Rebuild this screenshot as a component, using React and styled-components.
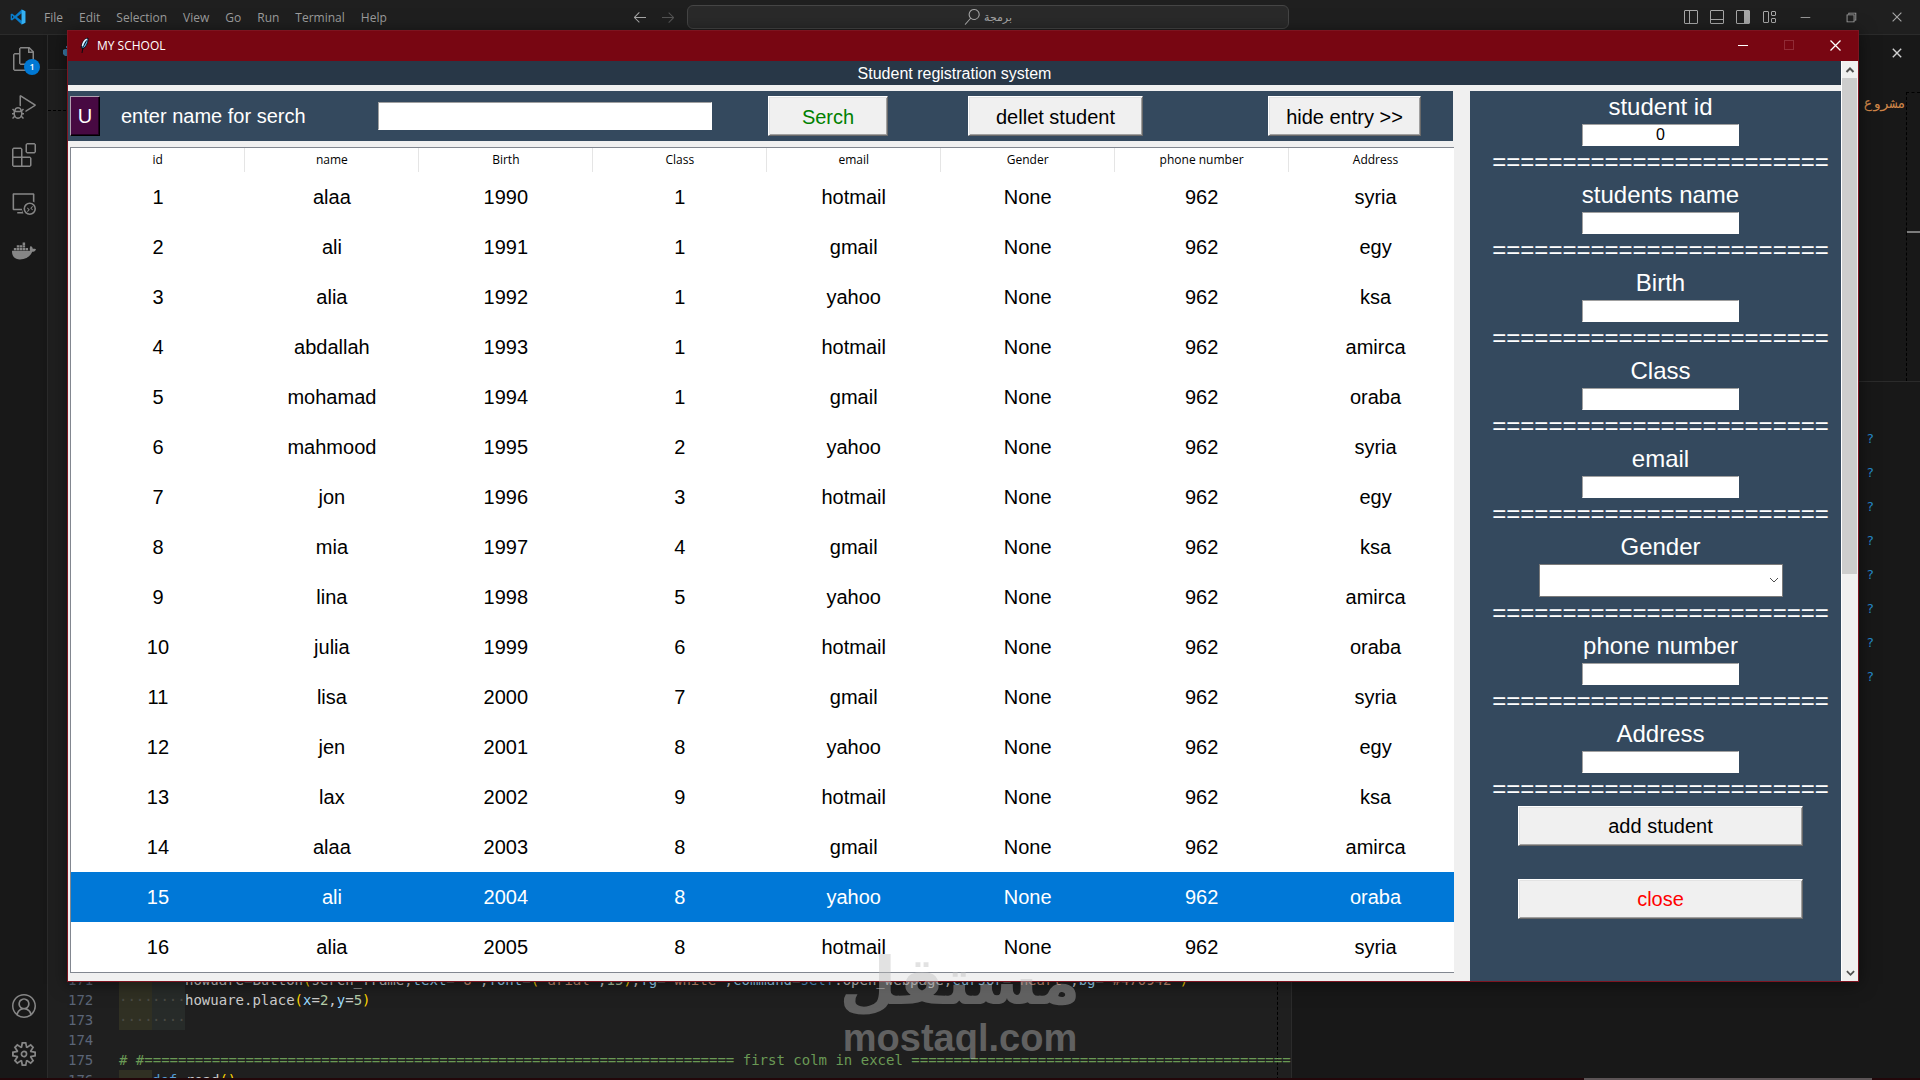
import React from "react";
import styled, { createGlobalStyle } from "styled-components";
import {
  VscFiles,
  VscDebugAlt,
  VscExtensions,
  VscRemoteExplorer,
  VscAccount,
  VscSettingsGear,
  VscArrowLeft,
  VscArrowRight,
  VscSearch,
  VscLayoutSidebarLeftOff,
  VscLayoutPanelOff,
  VscLayoutSidebarRight,
  VscLayout,
  VscChromeMinimize,
  VscChromeRestore,
  VscChromeClose,
} from "react-icons/vsc";
import { FaDocker } from "react-icons/fa";

const ui = '"Open Sans", "Noto Sans", sans-serif';
const arial = '"Liberation Sans", Arial, sans-serif';
const mono = '"DejaVu Sans Mono", monospace';

const Global = createGlobalStyle`
  *, *::before, *::after { box-sizing: border-box; }
  body { margin: 0; background: #181818; overflow: hidden; }
  button, input, select { font: inherit; margin: 0; }
`;

/* ---------- code editor in the background ---------- */

const Desktop = styled.div`
  position: relative;
  display: flex;
  flex-direction: column;
  height: 100vh;
  overflow: hidden;
  background: #181818;
  font-family: ${ui};
`;

const TitleBar = styled.header`
  display: grid;
  grid-template-columns: 1fr auto 1fr;
  align-items: center;
  height: 35px;
  flex: none;
  background: #1f1f1f;
  border-bottom: 1px solid #2b2b2b;
  color: #9d9d9d;
  font-size: 12px;
`;

const MenuBar = styled.nav`
  display: flex;
  align-items: center;
  padding-left: 10px;
`;

const MenuItem = styled.button`
  padding: 1px 8px 0;
  border: 0;
  background: none;
  color: inherit;
  line-height: 20px;
`;

const LogoBox = styled.span`
  display: flex;
  margin-right: 10px;
`;

const CommandCenter = styled.div`
  display: flex;
  align-items: center;
  gap: 10px;
`;

const IconButton = styled.button`
  display: flex;
  align-items: center;
  justify-content: center;
  width: ${(p) => p.$w || 26}px;
  height: 24px;
  padding: 0;
  border: 0;
  background: none;
  color: ${(p) => (p.$dim ? "#555" : "#a8a8a8")};
`;

const CommandBox = styled.button`
  display: flex;
  align-items: center;
  justify-content: center;
  gap: 4px;
  width: 602px;
  height: 24px;
  padding: 0;
  border: 1px solid #454545;
  border-radius: 6px;
  background: #2a2a2a;
  color: #a8a8a8;
  font-family: "DejaVu Sans", sans-serif;
  font-size: 11px;
`;

const WindowTools = styled.div`
  display: flex;
  align-items: center;
  justify-content: flex-end;
`;

const Workbench = styled.div`
  display: flex;
  flex: 1;
  min-height: 0;
`;

const ActivityBar = styled.nav`
  display: flex;
  flex-direction: column;
  width: 48px;
  flex: none;
  border-right: 1px solid #2b2b2b;
  background: #181818;
`;

const ActivityItem = styled.button`
  position: relative;
  display: flex;
  align-items: center;
  justify-content: center;
  height: 48px;
  padding: 0;
  border: 0;
  background: none;
  color: #868686;
  margin-top: ${(p) => (p.$push ? "auto" : "0")};
`;

const Badge = styled.span`
  position: absolute;
  left: 24px;
  top: 24px;
  width: 16px;
  height: 16px;
  border-radius: 8px;
  background: #0078d4;
  color: #fff;
  font-size: 9px;
  font-weight: 600;
  line-height: 16px;
  text-align: center;
`;

const Editor = styled.main`
  display: flex;
  flex-direction: column;
  flex: 1;
  min-width: 0;
  overflow: hidden;
  background: #1f1f1f;
  border-right: 1px solid #2b2b2b;
`;

const TabStrip = styled.div`
  display: flex;
  align-items: center;
  height: 35px;
  flex: none;
  padding-left: 14px;
  border-bottom: 1px solid #2b2b2b;
  background: #181818;
`;

const CodeArea = styled.div`
  display: flex;
  flex-direction: column;
  justify-content: flex-end;
  flex: 1;
  min-height: 0;
  margin: 40px 13px -12px 0;
  border-top: 1px dashed #000;
  border-right: 1px dashed #000;
  font-family: ${mono};
  font-size: 14px;
  line-height: 20px;
  color: #ccc;
`;

const CodeLine = styled.div`
  display: flex;
  height: 20px;
  padding-left: 20px;
  white-space: pre;
`;

const LineNumber = styled.span`
  width: 51px;
  flex: none;
  color: #5b6577;
`;

const Indent = styled.span`
  width: 33px;
  flex: none;
  overflow: hidden;
  background: ${(p) => (p.$deep ? "#272b29" : "#303023")};
  color: #4a4a44;
`;

const Tok = styled.span`
  color: ${(p) => p.$c};
`;

const SidePanel = styled.aside`
  display: flex;
  flex-direction: column;
  width: 628px;
  flex: none;
  background: #181818;
`;

const PreviewPane = styled.section`
  display: flex;
  flex-direction: column;
  align-items: flex-end;
  height: 347px;
  flex: none;
  border-bottom: 1px solid #2b2b2b;
`;

const PanelTab = styled.div`
  display: flex;
  justify-content: flex-end;
  height: 57px;
  padding: 6px 15px 0 0;
`;

const PreviewBody = styled.div`
  display: flex;
  flex: 1;
`;

const PreviewText = styled.span`
  color: #d08648;
  font-family: "DejaVu Sans Mono", monospace;
  font-size: 14px;
  line-height: 22px;
`;

const Minimap = styled.div`
  width: 14px;
  padding-top: 138px;
  border-top: 1px dashed #000;
  border-left: 1px dashed #000;

  &::before {
    content: "";
    display: block;
    height: 2px;
    background: #7c7c7c;
  }
`;

const Prompts = styled.ul`
  display: flex;
  flex-direction: column;
  align-items: flex-end;
  gap: 14px;
  margin: 0;
  padding: 47px 46px 0 0;
  list-style: none;
  color: #2488c8;
  font-family: ${mono};
  font-size: 13px;
  line-height: 20px;
`;

const BottomStrip = styled.footer`
  display: flex;
  justify-content: flex-end;
  height: 2px;
  flex: none;
  padding-right: 48px;
  background: #22070a;

  &::after {
    content: "";
    width: 288px;
    background: #5c5456;
  }
`;

/* ---------- school window ---------- */

const AppWindow = styled.section`
  position: absolute;
  top: 30px;
  left: 67px;
  right: 61px;
  display: flex;
  flex-direction: column;
  border: 1px solid #7d1420;
  background: #f0f0f0;
  box-shadow: 0 2px 16px rgba(0, 0, 0, 0.5);
`;

const Caption = styled.header`
  display: flex;
  align-items: center;
  height: 30px;
  padding: 0 0 2px 10px;
  background: #780612;
  color: #fff;
`;

const CaptionTitle = styled.h1`
  flex: 1;
  margin: 0 0 0 7px;
  font-size: 12px;
  font-weight: 400;
`;

const CaptionButton = styled.button`
  display: flex;
  align-items: center;
  justify-content: center;
  width: 46px;
  height: 28px;
  padding: 0;
  border: 0;
  background: none;
  color: #fff;
`;

const Client = styled.div`
  display: flex;
  font-family: ${arial};
`;

const Page = styled.div`
  flex: 1;
  min-width: 0;
`;

const Banner = styled.h2`
  height: 24px;
  margin: 0 0 6px;
  background: #283747;
  color: #fff;
  font-size: 16px;
  font-weight: 400;
  line-height: 26px;
  text-align: center;
`;

const Columns = styled.div`
  display: flex;
  gap: 16px;
`;

const ListPane = styled.div`
  flex: 1;
  min-width: 0;
`;

const Toolbar = styled.form`
  display: flex;
  align-items: center;
  height: 50px;
  margin: 0 1px 6px 0;
  padding: 0 32px 0 2px;
  background: #34495e;
  color: #fff;
  font-size: 20px;
`;

const RaisedButton = styled.button`
  width: ${(p) => p.$w}px;
  height: 40px;
  margin-left: ${(p) => p.$ml || "0"};
  padding: ${(p) => p.$drop || 0}px 0 0;
  border: 1px solid;
  border-color: #fff #696969 #696969 #fff;
  border-radius: 0;
  box-shadow: inset 1px 1px #e3e3e3, inset -1px -1px #a0a0a0;
  background: #f0f0f0;
  color: ${(p) => p.$c || "#000"};
  font-size: 20px;
  line-height: 24px;
`;

const UserButton = styled(RaisedButton)`
  border-color: #b0a0b0 #000 #000 #b0a0b0;
  box-shadow: inset -1px -1px #200020;
  background: #470942;
  color: #fff;
`;

const SearchLabel = styled.label`
  width: 257px;
  margin-left: 21px;
`;

const TextBox = styled.input`
  width: ${(p) => p.$w}px;
  height: ${(p) => p.$h}px;
  padding: 0 2px;
  border: 1px solid;
  border-color: #a0a0a0 #fff #fff #a0a0a0;
  border-radius: 0;
  background: #fff;
  color: #000;
  font-size: 16px;
  text-align: ${(p) => p.$align || "left"};
`;

const Tree = styled.div`
  margin: 0 0 8px 2px;
  overflow: hidden;
  border: 1px solid #828790;
  border-right: 0;
  background: #fff;
`;

const Table = styled.table`
  width: calc(100% + 9px);
  border-collapse: collapse;
  table-layout: fixed;
`;

const HeadCell = styled.th`
  height: 24px;
  padding: 0;
  border-right: 1px solid #e5e5e5;
  color: #000;
  font-family: ${ui};
  font-size: 12px;
  font-weight: 400;
  line-height: 20px;
`;

const Row = styled.tr`
  height: 50px;
  background: ${(p) => (p.$selected ? "#0078d7" : "#fff")};
  color: ${(p) => (p.$selected ? "#fff" : "#000")};
`;

const Cell = styled.td`
  padding: 0;
  font-size: 20px;
  line-height: 24px;
  text-align: center;
`;

const EntryForm = styled.form`
  display: flex;
  flex-direction: column;
  align-items: center;
  width: 371px;
  flex: none;
  padding-left: 10px;
  background: #34495e;
  color: #fff;
  font-size: 24px;
`;

const Field = styled.div`
  display: flex;
  flex-direction: column;
  align-items: center;
`;

const FieldLabel = styled.label`
  padding-bottom: 2px;
  line-height: 31px;
`;

const Rule = styled.span`
  padding-bottom: 2px;
  line-height: 31px;
`;

const ComboWrap = styled.div`
  position: relative;
  display: flex;

  svg {
    position: absolute;
    right: 4px;
    top: 12px;
  }
`;

const Combo = styled.select`
  width: 244px;
  height: 33px;
  padding: 0 20px 0 4px;
  border: 1px solid #7a7a7a;
  border-radius: 0;
  appearance: none;
  background: #fff;
  color: #000;
  font-size: 16px;
`;

const FormButtons = styled.div`
  display: flex;
  flex-direction: column;
  gap: 33px;
`;

const ScrollBar = styled.div`
  display: flex;
  flex-direction: column;
  width: 17px;
  flex: none;
  border-left: 1px solid #fff;
  background: #f0f0f0;
`;

const ScrollArrow = styled.button`
  display: flex;
  align-items: center;
  justify-content: center;
  height: 17px;
  flex: none;
  padding: 0;
  border: 0;
  background: #f0f0f0;
`;

const Track = styled.div`
  flex: 1;
  margin-right: 1px;
`;

const Thumb = styled.div`
  height: 56%;
  background: #cdcdcd;
`;

/* ---------- watermark ---------- */

const Watermark = styled.div`
  position: absolute;
  left: 0;
  right: 0;
  bottom: 20px;
  display: flex;
  flex-direction: column;
  align-items: center;
  color: #bcbcbc;
  opacity: 0.42;
  pointer-events: none;
  font-weight: 700;
`;

const MarkArabic = styled.span`
  font-family: "DejaVu Sans", sans-serif;
  font-size: 66px;
  line-height: 68px;
`;

const MarkLatin = styled.span`
  font-family: ${arial};
  font-size: 38px;
  line-height: 44px;
`;

const menus = ["File", "Edit", "Selection", "View", "Go", "Run", "Terminal", "Help"];

const headings = ["id", "name", "Birth", "Class", "email", "Gender", "phone number", "Address"];

const names = ["alaa", "ali", "alia", "abdallah", "mohamad", "mahmood", "jon", "mia", "lina", "julia", "lisa", "jen", "lax", "alaa", "ali", "alia"];
const classes = [1, 1, 1, 1, 1, 2, 3, 4, 5, 6, 7, 8, 9, 8, 8, 8];
const mails = ["hotmail", "gmail", "yahoo"];
const places = ["syria", "egy", "ksa", "amirca", "oraba"];

const students = names.map((name, i) => [
  i + 1,
  name,
  1990 + i,
  classes[i],
  mails[i % 3],
  "None",
  962,
  places[i % 5],
]);

const fields = [
  { id: "student-id", label: "student id", value: "0" },
  { id: "student-name", label: "students name" },
  { id: "birth", label: "Birth" },
  { id: "class", label: "Class" },
  { id: "email", label: "email" },
  { id: "gender", label: "Gender", combo: true },
  { id: "phone", label: "phone number" },
  { id: "address", label: "Address" },
];

const W = "#cccccc";
const B = "#9cdcfe";
const O = "#ce9178";
const Y = "#ffd700";
const G = "#6a9955";
const K = "#569cd6";
const N = "#b5cea8";

const code = [
  {
    n: 171, indent: 2,
    t: [[W, "howuare=Button"], [Y, "("], [W, "serch_frame,"], [B, "text"], [W, "="], [O, '"U"'], [W, ","], [B, "font"], [W, "="], [Y, "("], [O, '"arial"'], [W, ","], [N, "15"], [Y, ")"], [W, ","], [B, "fg"], [W, "="], [O, "'white'"], [W, ","], [B, "command"], [W, "="], [K, "self"], [W, ".open_webpage,"], [B, "cursor"], [W, "="], [O, "'heart'"], [W, ","], [B, "bg"], [W, "="], [O, '"#470942"'], [Y, ")"]],
  },
  { n: 172, indent: 2, t: [[W, "howuare.place"], [Y, "("], [B, "x"], [W, "="], [N, "2"], [W, ","], [B, "y"], [W, "="], [N, "5"], [Y, ")"]] },
  { n: 173, indent: 2, t: [] },
  { n: 174, indent: 0, t: [] },
  { n: 175, indent: 0, t: [[G, "# #" + "=".repeat(70) + " first colm in excel " + "=".repeat(49)]] },
  { n: 176, indent: 1, t: [[K, "def "], [W, "read"], [Y, "()"], [W, ":"]] },
];

const VsLogo = () => (
  <svg width="16" height="16" viewBox="0 0 24 24" aria-hidden="true">
    <path fill="#0a7cc9" d="M17.5 0.8 7.4 10.2 3 6.8 1 7.8v8.4l2 1 4.4-3.4 10.1 9.4L23 20.6V3.4zM3 14.3V9.7L5.4 12zM10.3 12 17.5 6.5v11z" />
    <path fill="#35b1f3" d="M17.5 0.8 23 3.4v17.2l-5.5 2.6z" />
  </svg>
);

const Feather = () => (
  <svg width="12" height="16" viewBox="0 0 12 16" aria-hidden="true">
    <path d="M10 1C7 1.5 3.5 5 3.2 11L5 12C8.5 9.5 10.5 5 10 1z" fill="#5fb2e6" stroke="#0c0c14" strokeWidth="1" />
    <path d="M8.5 3.5 5 10 4 16" fill="none" stroke="#0b0b12" strokeWidth="1" />
    <path d="M8.8 2.2C6.5 3.5 5 6 4.4 9" fill="none" stroke="#e8f6ff" strokeWidth="1.4" />
  </svg>
);

const Chevron = ({ up, w = 10, bold }) => (
  <svg width={w} height="8" viewBox="0 0 10 8" aria-hidden="true">
    <path d={up ? "M1.5 6 5 2.5 8.5 6" : "M1 2 5 6 9 2"} fill="none" stroke="#505050" strokeWidth={bold ? 2 : 1} />
  </svg>
);

function CodeEditor() {
  return (
    <>
      <TitleBar>
        <MenuBar>
          <LogoBox><VsLogo /></LogoBox>
          {menus.map((m) => <MenuItem key={m} type="button">{m}</MenuItem>)}
        </MenuBar>
        <CommandCenter>
          <IconButton type="button" $w={18} aria-label="Back"><VscArrowLeft size={16} /></IconButton>
          <IconButton type="button" $w={18} $dim aria-label="Forward"><VscArrowRight size={16} /></IconButton>
          <CommandBox type="button">
            <VscSearch size={16} />
            <span>برمجة</span>
          </CommandBox>
        </CommandCenter>
        <WindowTools>
          <IconButton type="button" aria-label="Primary side bar"><VscLayoutSidebarLeftOff size={16} /></IconButton>
          <IconButton type="button" aria-label="Panel"><VscLayoutPanelOff size={16} /></IconButton>
          <IconButton type="button" aria-label="Secondary side bar"><VscLayoutSidebarRight size={16} /></IconButton>
          <IconButton type="button" aria-label="Customize layout"><VscLayout size={16} /></IconButton>
          <IconButton type="button" $w={46} aria-label="Minimize"><VscChromeMinimize size={14} /></IconButton>
          <IconButton type="button" $w={46} aria-label="Restore"><VscChromeRestore size={14} /></IconButton>
          <IconButton type="button" $w={46} aria-label="Close"><VscChromeClose size={14} /></IconButton>
        </WindowTools>
      </TitleBar>
      <Workbench>
        <ActivityBar>
          <ActivityItem type="button" aria-label="Explorer"><VscFiles size={24} /><Badge>1</Badge></ActivityItem>
          <ActivityItem type="button" aria-label="Run and debug"><VscDebugAlt size={24} /></ActivityItem>
          <ActivityItem type="button" aria-label="Extensions"><VscExtensions size={24} /></ActivityItem>
          <ActivityItem type="button" aria-label="Remote explorer"><VscRemoteExplorer size={24} /></ActivityItem>
          <ActivityItem type="button" aria-label="Docker"><FaDocker size={24} /></ActivityItem>
          <ActivityItem type="button" $push aria-label="Accounts"><VscAccount size={24} /></ActivityItem>
          <ActivityItem type="button" aria-label="Manage"><VscSettingsGear size={24} /></ActivityItem>
        </ActivityBar>
        <Editor>
          <TabStrip>
            <svg width="14" height="14" viewBox="0 0 14 14" aria-hidden="true">
              <path d="M4 1h5a2 2 0 0 1 2 2v4H5v4H3L1 9V5l2-1h4V3H4z" fill="#3b7dab" />
            </svg>
          </TabStrip>
          <CodeArea>
            {code.map((l) => (
              <CodeLine key={l.n}>
                <LineNumber>{l.n}</LineNumber>
                {l.indent > 0 && <Indent>{l.n === 176 ? "" : "····"}</Indent>}
                {l.indent > 1 && <Indent $deep>····</Indent>}
                {l.t.map(([c, s], i) => <Tok key={i} $c={c}>{s}</Tok>)}
              </CodeLine>
            ))}
          </CodeArea>
        </Editor>
        <SidePanel>
          <PreviewPane>
            <PanelTab>
              <IconButton type="button" $w={16} aria-label="Close panel">
                <svg width="10" height="10" aria-hidden="true">
                  <path d="M.8.8l8.4 8.4M9.2.8.8 9.2" stroke="#d0d0d0" strokeWidth="1.4" />
                </svg>
              </IconButton>
            </PanelTab>
            <PreviewBody>
              <PreviewText>مشروع</PreviewText>
              <Minimap />
            </PreviewBody>
          </PreviewPane>
          <Prompts>
            {Array.from({ length: 8 }, (_, i) => <li key={i}>?</li>)}
          </Prompts>
        </SidePanel>
      </Workbench>
      <BottomStrip />
    </>
  );
}

function StudentTable() {
  return (
    <Tree>
      <Table>
        <thead>
          <tr>{headings.map((h) => <HeadCell key={h} scope="col">{h}</HeadCell>)}</tr>
        </thead>
        <tbody>
          {students.map((s) => (
            <Row key={s[0]} $selected={s[0] === 15}>
              {s.map((v, i) => <Cell key={i}>{v}</Cell>)}
            </Row>
          ))}
        </tbody>
      </Table>
    </Tree>
  );
}

function SchoolWindow() {
  return (
    <AppWindow>
      <Caption>
        <Feather />
        <CaptionTitle>MY SCHOOL</CaptionTitle>
        <CaptionButton type="button" aria-label="Minimize">
          <svg width="10" height="10"><path d="M0 5.5h10" stroke="#fff" /></svg>
        </CaptionButton>
        <CaptionButton type="button" aria-label="Maximize" disabled>
          <svg width="10" height="10"><rect x=".5" y=".5" width="9" height="9" fill="none" stroke="#a8505a" strokeDasharray="1 1" /></svg>
        </CaptionButton>
        <CaptionButton type="button" aria-label="Close">
          <svg width="11" height="11"><path d="M.5.5l10 10M10.5.5l-10 10" stroke="#fff" strokeWidth="1.3" /></svg>
        </CaptionButton>
      </Caption>
      <Client>
        <Page>
          <Banner>Student registration system</Banner>
          <Columns>
            <ListPane>
              <Toolbar onSubmit={(e) => e.preventDefault()}>
                <UserButton type="button" $w={30}>U</UserButton>
                <SearchLabel htmlFor="search">enter name for serch</SearchLabel>
                <TextBox id="search" type="text" $w={334} $h={28} />
                <RaisedButton $w={120} $ml="56px" $c="#008000" $drop={2}>Serch</RaisedButton>
                <RaisedButton type="button" $w={175} $ml="80px" $drop={2}>dellet student</RaisedButton>
                <RaisedButton type="button" $w={153} $ml="auto" $drop={2}>hide entry &gt;&gt;</RaisedButton>
              </Toolbar>
              <StudentTable />
            </ListPane>
            <EntryForm onSubmit={(e) => e.preventDefault()}>
              {fields.map((f) => (
                <Field key={f.id}>
                  <FieldLabel htmlFor={f.id}>{f.label}</FieldLabel>
                  {f.combo ? (
                    <ComboWrap>
                      <Combo id={f.id} defaultValue="">
                        <option value="" />
                      </Combo>
                      <Chevron />
                    </ComboWrap>
                  ) : (
                    <TextBox id={f.id} type="text" defaultValue={f.value} $w={157} $h={22} $align="center" />
                  )}
                  <Rule aria-hidden="true">{"=".repeat(24)}</Rule>
                </Field>
              ))}
              <FormButtons>
                <RaisedButton $w={285}>add student</RaisedButton>
                <RaisedButton type="button" $w={285} $c="#ff0000">close</RaisedButton>
              </FormButtons>
            </EntryForm>
          </Columns>
        </Page>
        <ScrollBar>
          <ScrollArrow type="button" aria-label="Scroll up"><Chevron up bold /></ScrollArrow>
          <Track><Thumb /></Track>
          <ScrollArrow type="button" aria-label="Scroll down"><Chevron bold w={9} /></ScrollArrow>
        </ScrollBar>
      </Client>
    </AppWindow>
  );
}

export default function App() {
  return (
    <Desktop>
      <Global />
      <CodeEditor />
      <SchoolWindow />
      <Watermark>
        <MarkArabic>مستقل</MarkArabic>
        <MarkLatin>mostaql.com</MarkLatin>
      </Watermark>
    </Desktop>
  );
}
